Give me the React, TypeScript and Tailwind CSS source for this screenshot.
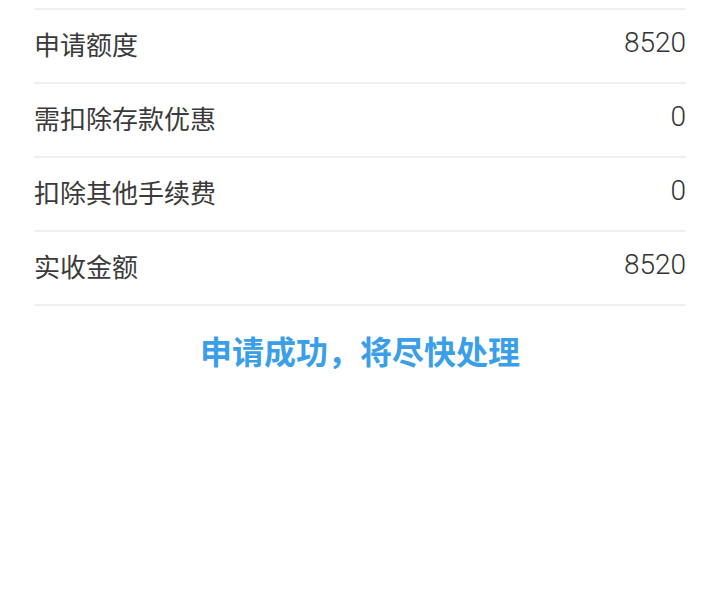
import React from "react";

const rows = [
  { label: "申请额度", value: "8520" },
  { label: "需扣除存款优惠", value: "0" },
  { label: "扣除其他手续费", value: "0" },
  { label: "实收金额", value: "8520" },
];

export default function App() {
  return (
    <div
      className="w-[720px] h-[606px] bg-white"
      style={{ fontFamily: '"Noto Sans CJK SC", "Noto Sans", sans-serif' }}
    >
      <div className="px-[34px] pt-[8px]">
        <div className="border-t-2 border-[#f0f0f0]">
          {rows.map((r) => (
            <div
              key={r.label}
              className="h-[74px] border-b-2 border-[#f0f0f0] flex items-center justify-between text-[26px] text-[#3a3a3a] pb-[6px]"
            >
              <span>{r.label}</span>
              <span className="font-['Roboto',sans-serif] font-light text-[28px] text-[#333333]">
                {r.value}
              </span>
            </div>
          ))}
        </div>
        <div className="mt-[26px] text-center text-[32px] leading-[36px] font-bold text-[#3a9ee8]">
          申请成功，将尽快处理
        </div>
      </div>
    </div>
  );
}
